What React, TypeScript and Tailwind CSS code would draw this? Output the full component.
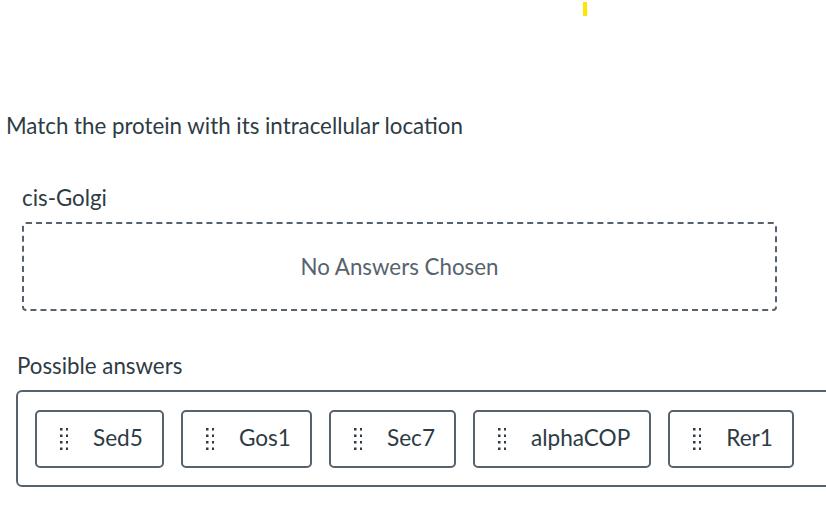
import React from "react";

const Handle = () => (
  <svg width="8" height="22" viewBox="0 0 8 22" className="shrink-0">
    {[0, 1, 2, 3].map((r) =>
      [0, 1].map((c) => (
        <rect key={`${r}-${c}`} x={c * 6} y={r * 6.5} width="2.5" height="2.5" fill="#2d3b45" />
      ))
    )}
  </svg>
);

const Chip = ({ label }: { label: string }) => (
  <div className="flex h-[58px] shrink-0 items-center gap-[25px] rounded-[5px] border-2 border-[#56636e] bg-white pl-[23px] pr-[19px]">
    <Handle />
    <span className="text-[22.6px] leading-none text-[#2d3b45]">{label}</span>
  </div>
);

export default function App() {
  return (
    <div
      className="relative h-[510px] w-[826px] overflow-hidden bg-white text-[#2d3b45]"
      style={{ fontFamily: "Lato, 'Open Sans', sans-serif" }}
    >
      <div className="absolute left-[583px] top-[2px] h-[14px] w-[4px] bg-[#ffe600]" />
      <div className="pt-[110px]">
        <h1 className="pl-[6px] text-[22.3px] leading-[32px]">Match the protein with its intracellular location</h1>
        <div className="mt-[40px] pl-[22px] text-[22.3px] leading-[32px]">cis-Golgi</div>
        <div className="ml-[22px] mt-[8px] flex h-[89px] w-[755px] items-center justify-center rounded-[4px] border-2 border-dashed border-[#56636e]">
          <span className="text-[22.3px] text-[#56636e]">No Answers Chosen</span>
        </div>
        <div className="mt-[39px] pl-[17px] text-[22.3px] leading-[32px]">Possible answers</div>
        <div className="ml-[16px] mt-[8px] flex h-[97px] w-[830px] items-center gap-[17px] rounded-[6px] border-2 border-[#56636e] pl-[17px]">
          <Chip label="Sed5" />
          <Chip label="Gos1" />
          <Chip label="Sec7" />
          <Chip label="alphaCOP" />
          <Chip label="Rer1" />
        </div>
      </div>
    </div>
  );
}
